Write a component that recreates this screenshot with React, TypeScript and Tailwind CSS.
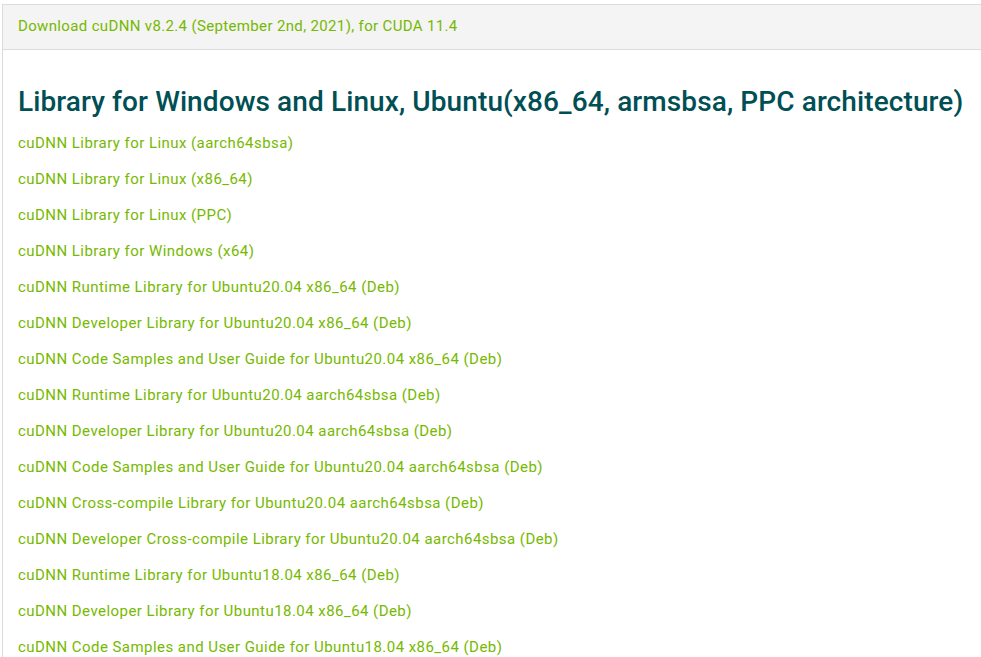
const LINKS = [
  'cuDNN Library for Linux (aarch64sbsa)',
  'cuDNN Library for Linux (x86_64)',
  'cuDNN Library for Linux (PPC)',
  'cuDNN Library for Windows (x64)',
  'cuDNN Runtime Library for Ubuntu20.04 x86_64 (Deb)',
  'cuDNN Developer Library for Ubuntu20.04 x86_64 (Deb)',
  'cuDNN Code Samples and User Guide for Ubuntu20.04 x86_64 (Deb)',
  'cuDNN Runtime Library for Ubuntu20.04 aarch64sbsa (Deb)',
  'cuDNN Developer Library for Ubuntu20.04 aarch64sbsa (Deb)',
  'cuDNN Code Samples and User Guide for Ubuntu20.04 aarch64sbsa (Deb)',
  'cuDNN Cross-compile Library for Ubuntu20.04 aarch64sbsa (Deb)',
  'cuDNN Developer Cross-compile Library for Ubuntu20.04 aarch64sbsa (Deb)',
  'cuDNN Runtime Library for Ubuntu18.04 x86_64 (Deb)',
  'cuDNN Developer Library for Ubuntu18.04 x86_64 (Deb)',
  'cuDNN Code Samples and User Guide for Ubuntu18.04 x86_64 (Deb)',
  'cuDNN Runtime Library for Ubuntu18.04 aarch64sbsa (Deb)',
];

export default function App() {
  return (
    <div className="h-[657px] overflow-hidden bg-white pl-[2px] pt-[4px] font-['Roboto',sans-serif]">
      <div className="w-[1000px] border-l border-t border-[#dcdcdc]">
        {/* Panel heading */}
        <div className="flex h-[45px] items-center border-b border-[#dcdcdc] bg-[#f4f4f4] pl-[15px]">
          <a href="#" className="-mt-[2px] text-[15px] tracking-[0.35px] text-[#76b900]">
            Download cuDNN v8.2.4 (September 2nd, 2021), for CUDA 11.4
          </a>
        </div>

        {/* Panel body */}
        <div className="pl-[15px] pt-[36px]">
          <h3 className="mb-[13px] text-[28px] font-medium leading-[32px] tracking-[0.1px] text-[#004f55]">
            Library for Windows and Linux, Ubuntu(x86_64, armsbsa, PPC architecture)
          </h3>
          <div className="flex flex-col">
            {LINKS.map((link) => (
              <a key={link} href="#" className="block h-[36px] text-[15px] leading-[24px] tracking-[0.45px] text-[#76b900]">
                {link}
              </a>
            ))}
          </div>
        </div>
      </div>
    </div>
  );
}
